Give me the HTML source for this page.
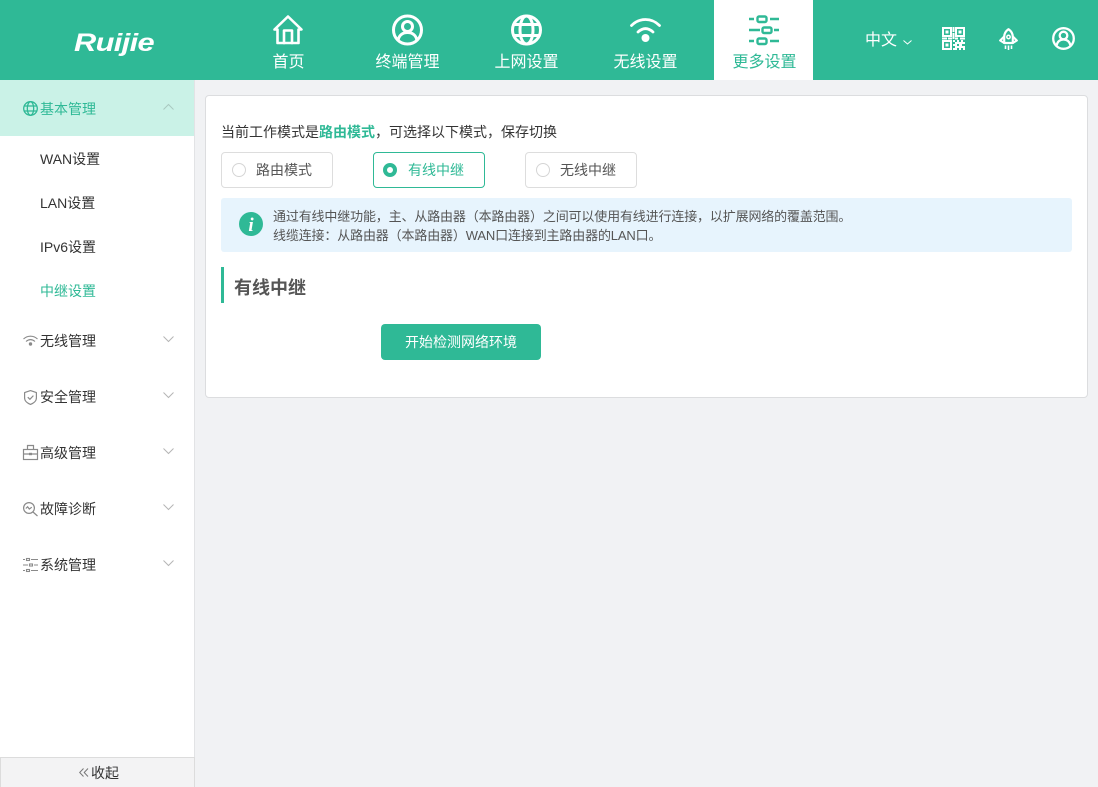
<!DOCTYPE html>
<html lang="zh"><head><meta charset="utf-8"><title>中继设置</title>
<style>
*{box-sizing:border-box}
html,body{margin:0;padding:0}
body{width:1098px;height:787px;overflow:hidden;position:relative;background:#f1f2f4;font-family:"Liberation Sans","Noto Sans CJK SC",sans-serif;color:#333;font-size:14px}
.a{position:absolute;white-space:nowrap}
svg{position:absolute;overflow:visible;fill:none}
.nav{font-size:16px;color:#fff;line-height:20px;text-align:center;width:119px;top:53px}
.m{left:40px;font-size:14px;line-height:20px;color:#333}
.s{left:40px;font-size:14px;line-height:20px;color:#333}
.radio{top:152px;width:112px;height:36px;border:1px solid #ddd;border-radius:4px;background:#fff}
.radio i{position:absolute;left:10px;top:10px;width:14px;height:14px;border:1px solid #d5d5d5;border-radius:50%}
.radio span{position:absolute;left:34px;top:7px;line-height:20px;color:#555}
</style></head><body>
<div class="a" style="left:0;top:0;width:1098px;height:80px;background:#2fb996"></div>
<div class="a" style="left:74px;top:27px;font:italic bold 25px/32px 'Liberation Sans',sans-serif;color:#fff;letter-spacing:-.5px;transform:scaleX(1.23);transform-origin:left">Ruijie</div>

<svg style="left:273px;top:15px" width="30" height="30" viewBox="0 0 30 30" stroke="#fff" stroke-width="2.600" stroke-linejoin="round" stroke-linecap="round"><path d="M1.500 14.500 15 1.500 28.500 14.500H25.500V28H4.500V14.500z"/><path d="M11 28V15.500h8V28"/></svg>
<svg style="left:392px;top:15px" width="31" height="31" viewBox="0 0 31 31" stroke="#fff" stroke-width="3"><circle cx="15.500" cy="15" r="14"/><circle cx="15.500" cy="11.500" r="5"/><path d="M6 25.500c1-5.500 5-8 9.500-8s8.500 2.500 9.500 8"/></svg>
<svg style="left:511px;top:15px" width="31" height="31" viewBox="0 0 31 31" stroke="#fff" stroke-width="3"><circle cx="15.500" cy="15" r="14"/><ellipse cx="15.500" cy="15" rx="6.500" ry="14"/><path d="M3 9.500h25M3 20.500h25"/></svg>
<svg style="left:630px;top:18px" width="31" height="24" viewBox="0 0 31 24" stroke="#fff" stroke-width="2.800" stroke-linecap="round"><path d="M1.500 7.500C9.500-.5 21.500-.5 29.500 7.500"/><path d="M8 14c5-4.500 10-4.500 15 0"/><circle cx="15.500" cy="20" r="4" fill="#fff" stroke="none"/></svg>
<div class="a" style="left:714px;top:0;width:99px;height:80px;background:#fff"></div>
<svg style="left:749px;top:15px" width="30" height="30" viewBox="0 0 30 30" stroke="#2fb996" stroke-width="2.400"><path d="M0 4h5M21 4h9M0 15h11M25 15h5M0 26h5M21 26h9"/><rect x="8.500" y="1.500" width="9" height="5.500" rx="1.500"/><rect x="13.500" y="12.500" width="9" height="5.500" rx="1.500"/><rect x="8.500" y="23.500" width="9" height="5.500" rx="1.500"/></svg>

<div class="a nav" style="left:229px">首页</div>
<div class="a nav" style="left:348px">终端管理</div>
<div class="a nav" style="left:467px">上网设置</div>
<div class="a nav" style="left:586px">无线设置</div>
<div class="a nav" style="left:705px;color:#2fb996">更多设置</div>

<div class="a" style="left:865px;top:31px;font-size:16px;line-height:20px;color:#fff">中文</div>
<svg style="left:903px;top:40px" width="9" height="5" viewBox="0 0 9 5" stroke="#fff"><path d="M.5.500l4 3.500 4-3.500"/></svg>
<svg style="left:942px;top:27px" width="23" height="23" viewBox="0 0 23 23"><g fill="#fff"><path fill-rule="evenodd" d="M0 0h10v10H0zM2 2v6h6V2zM13 0h10v10H13zM15 2v6h6V2zM0 13h10v10H0zM2 15v6h6v-6z"/><path d="M3.500 3.500h3v3h-3zM16.500 3.500h3v3h-3zM3.500 16.500h3v3h-3zM10.500 0h2v5h-2zM10.500 6h2v6h-2zM0 10.500h5v2H0zM6 10.500h4v2H6zM13 10.500h3v2h-3zM18 10.500h5v2h-5z"/><path fill-rule="evenodd" d="M11 13h2v2h2v-2h2v2h2v-2h2v2h2v2h-3v2h3v4h-2v-2h-2v2h-2v-2h-2v2h-4v-2h2v-2h-2v-2h2v-2h-2zM15 17v2h2v-2z"/></g></svg>
<svg style="left:999px;top:28px" width="19" height="22" viewBox="0 0 19 22" stroke="#fff" stroke-width="2.200" stroke-linejoin="round"><path d="M9.500 1.200c3 2 4.300 4.800 4.300 7.800v6H5.200V9c0-3 1.300-5.800 4.300-7.800z"/><path d="M5.200 8.500 1.200 12.500 5.200 15M13.800 8.500 17.800 12.500 13.800 15"/><circle cx="9.500" cy="9" r="1.700" stroke-width="1.500"/><path d="M6.500 17.500V21M9.500 17.500V22M12.500 17.500V21" stroke-width="1.600"/></svg>
<svg style="left:1052px;top:27px" width="23" height="23" viewBox="0 0 23 23" stroke="#fff" stroke-width="2.300"><circle cx="11.500" cy="11.500" r="10.300"/><circle cx="11.500" cy="8.500" r="3.800"/><path d="M4.500 18.500c1-4 3.500-6 7-6s6 2 7 6"/></svg>

<div class="a" style="left:0;top:80px;width:195px;height:707px;background:#fff;border-right:1px solid #e2e3e5"></div>
<div class="a" style="left:0;top:80px;width:194px;height:56px;background:#caf2e7"></div>
<svg style="left:23px;top:101px" width="15" height="15" viewBox="0 0 15 15" stroke="#2fb996" stroke-width="1.300"><circle cx="7.500" cy="7.500" r="6.800"/><ellipse cx="7.500" cy="7.500" rx="3.200" ry="6.800"/><path d="M1 5h13M1 10h13"/></svg>
<div class="a m" style="top:99px;color:#2fb996">基本管理</div>
<svg style="left:163px;top:104px" width="11" height="6" viewBox="0 0 11 6" stroke="#a9c9c0"><path d="M.5 5.500l5-5 5 5"/></svg>
<div class="a s" style="top:149px">WAN设置</div>
<div class="a s" style="top:193px">LAN设置</div>
<div class="a s" style="top:237px">IPv6设置</div>
<div class="a s" style="top:281px;color:#2fb996">中继设置</div>

<svg style="left:23px;top:335px" width="15" height="12" viewBox="0 0 15 12" stroke="#8a8a8a" stroke-width="1.100"><path d="M.5 4C4.500.2 10.500.2 14.500 4M3 6.500c3-2.500 6-2.500 9 0"/><circle cx="7.500" cy="9" r="1.700" fill="#8a8a8a" stroke="none"/></svg>
<div class="a m" style="top:331px">无线管理</div>
<svg style="left:24px;top:390px" width="13" height="15" viewBox="0 0 13 15" stroke="#8a8a8a" stroke-width="1.200" stroke-linejoin="round"><path d="M6.500.6 12.400 2.600V8c0 3-3 5.300-5.900 6.400C3.600 13.300.6 11 .6 8V2.600z"/><path d="M3.800 7.200 5.900 9.300 9.400 5.600"/></svg>
<div class="a m" style="top:387px">安全管理</div>
<svg style="left:23px;top:445px" width="15" height="15" viewBox="0 0 15 15" stroke="#8a8a8a" stroke-width="1.200"><rect x=".5" y="4.500" width="14" height="10"/><path d="M4.500 4.500v-4h6v4M.5 9h5.500M9 9h5.500"/><rect x="6" y="7.800" width="3" height="2.400" fill="#8a8a8a" stroke="none"/></svg>
<div class="a m" style="top:443px">高级管理</div>
<svg style="left:23px;top:502px" width="15" height="15" viewBox="0 0 15 15" stroke="#8a8a8a" stroke-width="1.200"><circle cx="6" cy="6" r="5.400"/><path d="M2.800 6.500 4.600 4.800 6.300 7 8.800 5.200M10 10l4.500 4"/></svg>
<div class="a m" style="top:499px">故障诊断</div>
<svg style="left:23px;top:558px" width="15" height="14" viewBox="0 0 15 14" stroke="#8a8a8a" stroke-width="1.100"><path d="M0 1.500h2M8 1.500h7M0 7h5M11 7h4M0 12.500h2M8 12.500h7"/><rect x="3.500" y=".5" width="3" height="2"/><rect x="6.500" y="6" width="3" height="2"/><rect x="3.500" y="11.500" width="3" height="2"/></svg>
<div class="a m" style="top:555px">系统管理</div>
<svg style="left:163px;top:336px" width="11" height="6" viewBox="0 0 11 6" stroke="#b5b5b5"><path d="M.5.500l5 5 5-5"/></svg>
<svg style="left:163px;top:392px" width="11" height="6" viewBox="0 0 11 6" stroke="#b5b5b5"><path d="M.5.500l5 5 5-5"/></svg>
<svg style="left:163px;top:448px" width="11" height="6" viewBox="0 0 11 6" stroke="#b5b5b5"><path d="M.5.500l5 5 5-5"/></svg>
<svg style="left:163px;top:504px" width="11" height="6" viewBox="0 0 11 6" stroke="#b5b5b5"><path d="M.5.500l5 5 5-5"/></svg>
<svg style="left:163px;top:560px" width="11" height="6" viewBox="0 0 11 6" stroke="#b5b5b5"><path d="M.5.500l5 5 5-5"/></svg>

<div class="a" style="left:0;top:757px;width:195px;height:30px;background:#f3f3f4;border:1px solid #dcdcdc;border-bottom:0"></div>
<svg style="left:79px;top:768px" width="10" height="9" viewBox="0 0 10 9" stroke="#777"><path d="M4.500.5 .7 4.500 4.500 8.500M9 .5 5.200 4.500 9 8.500"/></svg>
<div class="a" style="left:91px;top:763px;line-height:20px;color:#333">收起</div>

<div class="a" style="left:205px;top:95px;width:883px;height:303px;background:#fff;border:1px solid #dcdddf;border-radius:4px"></div>
<div class="a" style="left:221px;top:122px;line-height:20px;font-size:14px">当前工作模式是<b style="color:#2fb996;font-weight:700">路由模式</b>，可选择以下模式，保存切换</div>
<div class="a radio" style="left:221px"><i></i><span>路由模式</span></div>
<div class="a radio" style="left:373px;border-color:#2fb996"><i style="left:9px;border:4px solid #2fb996"></i><span style="color:#2fb996">有线中继</span></div>
<div class="a radio" style="left:525px"><i></i><span>无线中继</span></div>

<div class="a" style="left:221px;top:198px;width:851px;height:54px;background:#e7f4fd;border-radius:3px"></div>
<svg style="left:239px;top:212px" width="24" height="24" viewBox="0 0 24 24"><circle cx="12" cy="12" r="12" fill="#2fb996"/><text x="12" y="19" text-anchor="middle" font-family="Liberation Serif" font-style="italic" font-weight="700" font-size="19" fill="#fff">i</text></svg>
<div class="a" style="left:273px;top:207px;font-size:13px;line-height:19px;color:#555;letter-spacing:-.15px">通过有线中继功能，主、从路由器（本路由器）之间可以使用有线进行连接，以扩展网络的覆盖范围。<br>线缆连接：从路由器（本路由器）WAN口连接到主路由器的LAN口。</div>

<div class="a" style="left:221px;top:267px;width:3px;height:36px;background:#2fb996"></div>
<div class="a" style="left:234px;top:276px;font-size:18px;line-height:24px;font-weight:700;color:#555">有线中继</div>
<div class="a" style="left:381px;top:324px;width:160px;height:36px;background:#2fb996;border-radius:4px;color:#fff;font-size:14px;line-height:36px;text-align:center">开始检测网络环境</div>
</body></html>
